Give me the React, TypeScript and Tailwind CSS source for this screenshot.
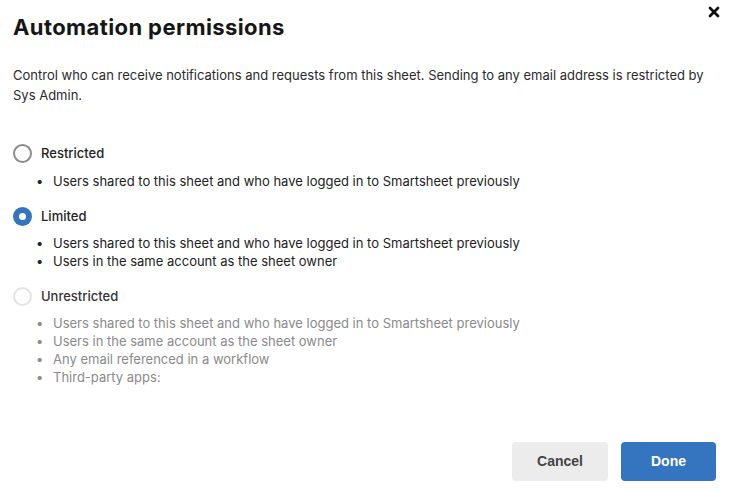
import { X } from 'lucide-react';

interface Option {
  label: string;
  state: 'off' | 'on' | 'disabled';
  items: string[];
}

const options: Option[] = [
  {
    label: 'Restricted',
    state: 'off',
    items: ['Users shared to this sheet and who have logged in to Smartsheet previously'],
  },
  {
    label: 'Limited',
    state: 'on',
    items: [
      'Users shared to this sheet and who have logged in to Smartsheet previously',
      'Users in the same account as the sheet owner',
    ],
  },
  {
    label: 'Unrestricted',
    state: 'disabled',
    items: [
      'Users shared to this sheet and who have logged in to Smartsheet previously',
      'Users in the same account as the sheet owner',
      'Any email referenced in a workflow',
      'Third-party apps:',
    ],
  },
];

const Radio = ({ state }: { state: Option['state'] }) => {
  if (state === 'on') {
    return (
      <span className="flex h-[19px] w-[19px] items-center justify-center rounded-full bg-[#3575c0]">
        <span className="h-[7px] w-[7px] rounded-full bg-white" />
      </span>
    );
  }
  return (
    <span
      className={
        state === 'off'
          ? 'h-[19px] w-[19px] rounded-full border-2 border-[#8c8c8c] bg-white'
          : 'h-[19px] w-[19px] rounded-full border-2 border-[#e3e3e3] bg-white'
      }
    />
  );
};

const App = () => {
  return (
    <div
      className="relative h-[491px] w-[732px] bg-white text-[#222]"
      style={{ fontFamily: 'Inter, "Noto Sans", sans-serif' }}
    >
      <button className="absolute right-[8px] top-[2px] p-[2px] text-[#111]">
        <X size={16} strokeWidth={4} />
      </button>

      <div className="flex h-full flex-col px-[13px] pt-[13px]">
        <h1 className="text-[22px] font-bold leading-[28px] tracking-[0.4px] text-[#161616]">
          Automation permissions
        </h1>

        <p className="mt-[24px] text-[13px] leading-[20px] text-[#2a2a2a]">
          Control who can receive notifications and requests from this sheet. Sending to any email
          address is restricted by Sys Admin.
        </p>

        {/* radio group */}
        <div className="mt-[39px] flex flex-col gap-[17px]">
          {options.map((opt) => (
            <div key={opt.label}>
              <div className="flex items-center gap-[9px]">
                <Radio state={opt.state} />
                <span
                  className={
                    opt.state === 'disabled'
                      ? 'text-[13px] font-medium text-[#333]'
                      : 'text-[13px] font-medium text-[#222]'
                  }
                >
                  {opt.label}
                </span>
              </div>
              <ul
                className={
                  opt.state === 'disabled'
                    ? 'mt-[7px] pl-[23px] text-[13px] leading-[18px] text-[#8a8a8a]'
                    : 'mt-[8px] pl-[23px] text-[13px] leading-[18px] text-[#222]'
                }
              >
                {opt.items.map((item) => (
                  <li key={item} className="flex">
                    <span className="w-[17px] shrink-0">•</span>
                    {item}
                  </li>
                ))}
              </ul>
            </div>
          ))}
        </div>

        <div className="mt-auto mb-[10px] flex justify-end gap-[13px] pr-[3px]">
          <button
            className="h-[39px] w-[96px] rounded-[4px] bg-[#ececec] text-[14px] font-bold text-[#444]"
            style={{ fontFamily: '"Liberation Sans", Arial, sans-serif' }}
          >
            Cancel
          </button>
          <button
            className="h-[39px] w-[95px] rounded-[4px] bg-[#3575c0] text-[14px] font-bold text-white"
            style={{ fontFamily: '"Liberation Sans", Arial, sans-serif' }}
          >
            Done
          </button>
        </div>
      </div>
    </div>
  );
};

export default App;
